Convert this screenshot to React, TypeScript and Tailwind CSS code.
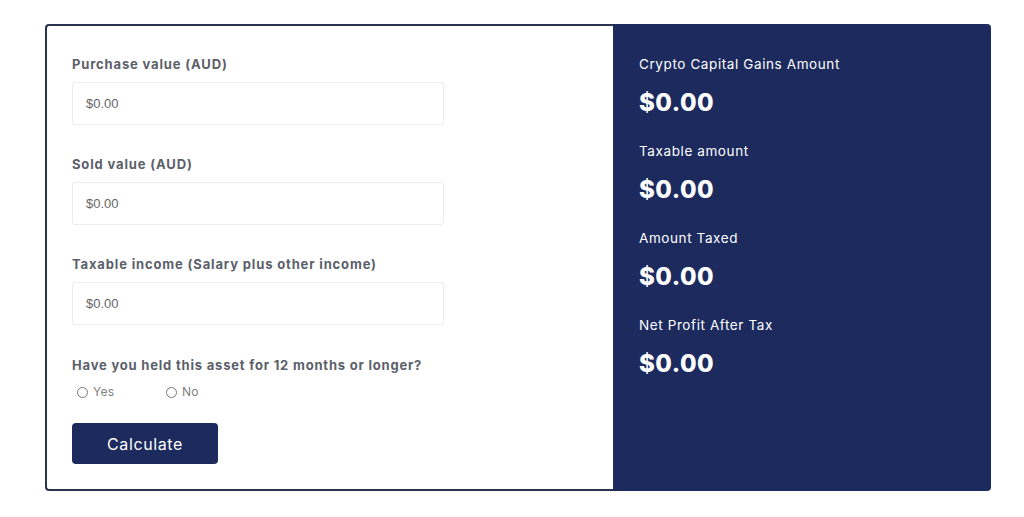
import React from "react";

const font = { fontFamily: "Inter, 'Noto Sans', sans-serif" };

const Field = ({ label, top }: { label: string; top?: boolean }) => (
  <div className={top ? "" : "mt-[30px]"}>
    <div className="text-[13px] font-bold text-[#5b5f6a] leading-[18px] tracking-[0.85px]">{label}</div>
    <div className="mt-[9px] w-[372px] h-[43px] border border-[#ececec] rounded-[3px] flex items-center px-[13px]">
      <span className="text-[13px] text-[#666] font-['Liberation_Sans',sans-serif]">$0.00</span>
    </div>
  </div>
);

const Result = ({ label, first }: { label: string; first?: boolean }) => (
  <div className={first ? "" : "mt-[24px]"}>
    <div className="text-[13.5px] text-white leading-[18px] tracking-[0.6px]">{label}</div>
    <div className="mt-[15px] text-[24px] font-extrabold text-white leading-[30px] tracking-[0.5px]">$0.00</div>
  </div>
);

export default function App() {
  return (
    <div className="w-[1024px] h-[517px] bg-white pt-[24px] pl-[45px]" style={font}>
      <div className="flex w-[946px] h-[467px]">
        {/* form */}
        <div className="w-[568px] h-full border-2 border-r-0 border-[#2c3350] rounded-l-[4px] pl-[25px] pt-[29px]">
          <Field label="Purchase value (AUD)" top />
          <Field label="Sold value (AUD)" />
          <Field label="Taxable income (Salary plus other income)" />
          <div className="mt-[31px] text-[13px] font-bold text-[#5b5f6a] leading-[18px] tracking-[0.8px]">
            Have you held this asset for 12 months or longer?
          </div>
          <div className="flex mt-[9px] pl-[5px] text-[12px] text-[#808080] tracking-[0.3px]">
            <label className="flex items-center gap-[5px] w-[89px]">
              <span className="w-[11px] h-[11px] rounded-full border border-[#777]" />
              Yes
            </label>
            <label className="flex items-center gap-[5px]">
              <span className="w-[11px] h-[11px] rounded-full border border-[#777]" />
              No
            </label>
          </div>
          <button className="mt-[22px] w-[146px] h-[41px] bg-[#1c2a5e] rounded-[4px] text-white text-[16px] tracking-[0.6px]">
            Calculate
          </button>
        </div>
        {/* results */}
        <div className="flex-1 h-full bg-[#1c2a5e] rounded-r-[4px] pl-[26px] pt-[31px]">
          <Result label="Crypto Capital Gains Amount" first />
          <Result label="Taxable amount" />
          <Result label="Amount Taxed" />
          <Result label="Net Profit After Tax" />
        </div>
      </div>
    </div>
  );
}
